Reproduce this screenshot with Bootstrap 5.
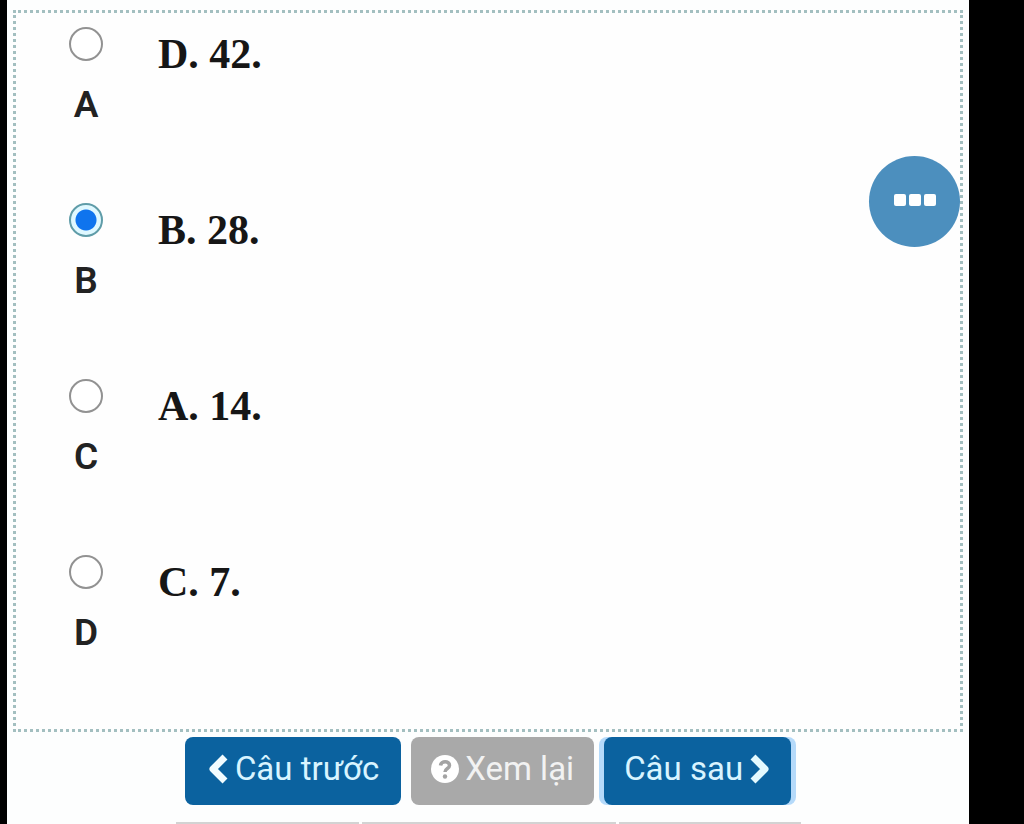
<!DOCTYPE html>
<html lang="vi">
<head>
<meta charset="utf-8">
<meta name="viewport" content="width=device-width, initial-scale=1">
<title>Câu hỏi</title>
<link href="https://cdn.jsdelivr.net/npm/bootstrap@5.3.0/dist/css/bootstrap.min.css" rel="stylesheet">
<script src="https://cdn.jsdelivr.net/npm/bootstrap@5.3.0/dist/js/bootstrap.bundle.min.js" defer></script>
<style>
  body { background: #000; font-family: Roboto, "Noto Sans", sans-serif; color: #222; }
  .quiz-page { background: #fdfefe; margin-left: 7px; margin-right: 55px; padding: 10px 6px 0; }
  .answers { border: 3px dotted #a3bfc0; background: #fefefe; padding: 14px 52px 0; }
  .answer { min-height: 176px; gap: 54px; }
  .answer:last-child { min-height: 174px; }
  .pick { width: 36px; }
  .pick input { appearance: none; width: 34px; height: 34px; margin: 0; border: 2px solid #929292; border-radius: 50%; background: #fff; display: block; }
  .pick input:checked { border-color: #5f9ca8; background: radial-gradient(circle, #0f74ee 0 10px, #dff8ff 11px); }
  .pick label { font-size: 37px; font-weight: 600; line-height: 44px; margin-top: 22px; }
  .answer-text { font: bold 42px/48px "Liberation Serif", serif; color: #161616; margin-top: 3px; }
  .more-btn { top: 156px; right: 64px; width: 91px; height: 91px; gap: 3px; padding: 0 0 4px; }
  .more-btn, .more-btn:hover { background: #4c8fbe; }
  .more-btn span { width: 12px; height: 12px; border-radius: 2px; background: #fff; }
  .nav-btn { height: 68px; border-radius: 8px; font-size: 33px; line-height: 36px; padding: 0 20px 4px; gap: 6px; border: 0; }
  .nav-prev { padding-left: 22px; padding-right: 22px; }
  .nav-blue, .nav-blue:hover { background: #0b629f; color: #d8f4ff; }
  .nav-grey, .nav-grey:hover { background: #a9a9a9; color: #f2f2f2; }
  .nav-focus { box-shadow: 5px 0 0 #b5dafa, -5px 0 0 #b5dafa; }
  .nav-row { gap: 10px; margin-top: 5px; }
  .grid-top { width: 625px; margin: 17px auto 0; gap: 3px; }
  .grid-top div { height: 3px; background: #d3d3d3; }
</style>
</head>
<body>
<main class="quiz-page min-vh-100 overflow-hidden">
  <form>
    <div class="answers">
      <div class="answer d-flex align-items-start">
        <div class="pick d-flex flex-column align-items-center"><input type="radio" name="answer" id="a"><label for="a">A</label></div>
        <div class="answer-text">D. 42.</div>
      </div>
      <div class="answer d-flex align-items-start">
        <div class="pick d-flex flex-column align-items-center"><input type="radio" name="answer" id="b" checked><label for="b">B</label></div>
        <div class="answer-text">B. 28.</div>
      </div>
      <div class="answer d-flex align-items-start">
        <div class="pick d-flex flex-column align-items-center"><input type="radio" name="answer" id="c"><label for="c">C</label></div>
        <div class="answer-text">A. 14.</div>
      </div>
      <div class="answer d-flex align-items-start">
        <div class="pick d-flex flex-column align-items-center"><input type="radio" name="answer" id="d"><label for="d">D</label></div>
        <div class="answer-text">C. 7.</div>
      </div>
    </div>
    <div class="nav-row d-flex justify-content-center">
      <button type="button" class="btn nav-btn nav-blue nav-prev d-flex align-items-center">
        <svg width="22" height="30" viewBox="0 0 22 30" fill="none" stroke="#f2fcff" stroke-width="7" stroke-linejoin="round" aria-hidden="true"><path d="M18 3 6 15l12 12"/></svg>Câu trước</button>
      <button type="button" class="btn nav-btn nav-grey d-flex align-items-center">
        <svg width="28" height="28" viewBox="0 0 28 28" fill="none" aria-hidden="true"><circle cx="14" cy="14" r="14" fill="#fff"/><path d="M9.500 10.500C10 5.500 18.500 5.500 18.500 10.500 18.500 13.500 14 13.500 14 17" stroke="#a3a3a3" stroke-width="3.500"/><circle cx="14" cy="21.500" r="2.200" fill="#a3a3a3"/></svg>Xem lại</button>
      <button type="button" class="btn nav-btn nav-blue nav-focus d-flex align-items-center">Câu sau
        <svg width="22" height="30" viewBox="0 0 22 30" fill="none" stroke="#e4faff" stroke-width="7" stroke-linejoin="round" aria-hidden="true"><path d="M4 3l12 12L4 27"/></svg></button>
    </div>
    <div class="grid-top d-flex"><div style="flex:183"></div><div style="flex:254"></div><div style="flex:182"></div></div>
  </form>
</main>
<button type="button" class="more-btn btn rounded-circle border-0 position-absolute d-flex align-items-center justify-content-center" aria-label="Thêm"><span></span><span></span><span></span></button>
</body>
</html>
